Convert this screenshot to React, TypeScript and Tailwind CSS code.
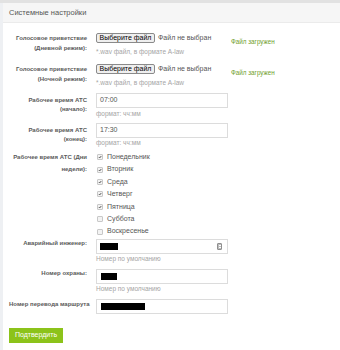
import React from "react";

const font = { fontFamily: '"Liberation Sans", Arial, sans-serif' };

type Day = { name: string; checked: boolean };

const days: Day[] = [
  { name: "Понедельник", checked: true },
  { name: "Вторник", checked: true },
  { name: "Среда", checked: true },
  { name: "Четверг", checked: true },
  { name: "Пятница", checked: true },
  { name: "Суббота", checked: false },
  { name: "Воскресенье", checked: false },
];

const Label = ({ children, className = "" }: { children: React.ReactNode; className?: string }) => (
  <div
    className={`w-[78px] shrink-0 ml-[9px] text-right whitespace-nowrap text-[6px] font-bold text-[#5a5a5a] ${className}`}
  >
    {children}
  </div>
);

const Hint = ({ children, className = "" }: { children: React.ReactNode; className?: string }) => (
  <div className={`text-[6.5px] leading-[8px] text-[#a5a5a5] ${className}`}>{children}</div>
);

const FileRow = ({ line1, line2, className = "" }: { line1: string; line2: string; className?: string }) => (
  <div className={`flex items-start ${className}`}>
    <Label className="leading-[10px]">
      {line1}
      <br />
      {line2}
    </Label>
    <div className="ml-[9px] w-[132px]">
      <div className="flex items-center h-[10px]">
        <span className="h-[10px] w-[59px] flex items-center justify-center text-[7px] text-black bg-[#efefef] border border-[#8a8a8a] rounded-[2px]">
          Выберите файл
        </span>
        <span className="ml-[3px] text-[7px] text-[#555]">Файл не выбран</span>
      </div>
      <Hint className="mt-[5px]">*.wav файл, в формате A-law</Hint>
    </div>
    <div className="ml-[3px] pt-[5px] text-[6.3px] leading-[8px] text-[#6fa02a]">Файл загружен</div>
  </div>
);

const TextInput = ({ children }: { children?: React.ReactNode }) => (
  <div className="h-[15px] w-[132px] border border-[#dcdcdc] bg-white flex items-center px-[3px] text-[7px] text-[#555]">
    {children}
  </div>
);

const Redacted = ({ w }: { w: string }) => <div className={`h-[7px] bg-black ${w}`} />;

export default function App() {
  return (
    <div style={font} className="w-[340px] h-[350px] bg-white border-t-[3px] border-t-[#e2e2e2] flex">
      <div className="w-[3px] bg-[#eef0f3] shrink-0" />
      <div className="flex-1 flex flex-col">
        <div className="h-[20px] bg-[#f6f6f6] border-b border-[#ebebeb] flex items-center px-[6px] text-[7.5px] text-[#555]">
          Системные настройки
        </div>

        <div className="pt-[10px] -ml-[3px]">
          <FileRow line1="Голосовое приветствие" line2="(Дневной режим):" />
          <FileRow line1="Голосовое приветствие" line2="(Ночной режим):" className="mt-[8px]" />

          <div className="flex items-start mt-[6px]">
            <Label className="leading-[9px] pt-[3px]">
              Рабочее время АТС
              <br />
              (начало):
            </Label>
            <div className="ml-[9px]">
              <TextInput>07:00</TextInput>
              <Hint className="mt-[2px]">формат: чч:мм</Hint>
            </div>
          </div>

          <div className="flex items-start mt-[5px]">
            <Label className="leading-[9px] pt-[3px]">
              Рабочее время АТС
              <br />
              (конец):
            </Label>
            <div className="ml-[9px]">
              <TextInput>17:30</TextInput>
              <Hint className="mt-[1px]">формат: чч:мм</Hint>
            </div>
          </div>

          <div className="flex items-start mt-[4px]">
            <Label className="leading-[12.4px]">
              Рабочее время АТС (Дни
              <br />
              недели):
            </Label>
            <div className="ml-[9px] flex flex-col">
              {days.map((d) => (
                <div key={d.name} className="h-[12.4px] flex items-center">
                  <span className="w-[6px] h-[6px] ml-[1px] border border-[#c8c8c8] bg-[#f3f3f3] rounded-[1px] flex items-center justify-center">
                    {d.checked && (
                      <svg viewBox="0 0 10 10" className="w-[6px] h-[6px]">
                        <path d="M2 5.2 L4.2 7.4 L8.2 2.6" fill="none" stroke="#333" strokeWidth="2" />
                      </svg>
                    )}
                  </span>
                  <span className="ml-[4px] text-[7px] text-[#555]">{d.name}</span>
                </div>
              ))}
            </div>
          </div>

          <div className="flex items-start mt-[1.5px]">
            <Label className="leading-[9px]">Аварийный инженер:</Label>
            <div className="ml-[9px]">
              <div className="h-[15px] w-[132px] border border-[#dcdcdc] bg-white flex items-center justify-between px-[3px]">
                <Redacted w="w-[18px]" />
                <span className="w-[5px] h-[7px] mr-[2px] bg-[#bdbdbd] border border-[#8f8f8f] rounded-[1px] flex flex-col justify-center items-center gap-[1px]">
                  <span className="w-[2px] h-[1px] bg-white" />
                  <span className="w-[2px] h-[1px] bg-white" />
                </span>
              </div>
              <Hint className="mt-[1px]">Номер по умолчанию</Hint>
            </div>
          </div>

          <div className="flex items-start mt-[6px]">
            <Label className="leading-[9px]">Номер охраны:</Label>
            <div className="ml-[9px]">
              <TextInput>
                <Redacted w="w-[16px] ml-[1px]" />
              </TextInput>
              <Hint className="mt-[1px]">Номер по умолчанию</Hint>
            </div>
          </div>

          <div className="flex items-start mt-[6px]">
            <Label className="leading-[9px] pt-[1px]">Номер перевода маршрута</Label>
            <div className="ml-[9px]">
              <TextInput>
                <Redacted w="w-[44px] ml-[1px] h-[6px]" />
              </TextInput>
            </div>
          </div>

          <div className="mt-[14px] ml-[9px]">
            <button className="h-[15px] w-[54px] bg-[#8cc31a] text-white text-[7px] flex items-center justify-center">
              Подтвердить
            </button>
          </div>
        </div>
      </div>
    </div>
  );
}
